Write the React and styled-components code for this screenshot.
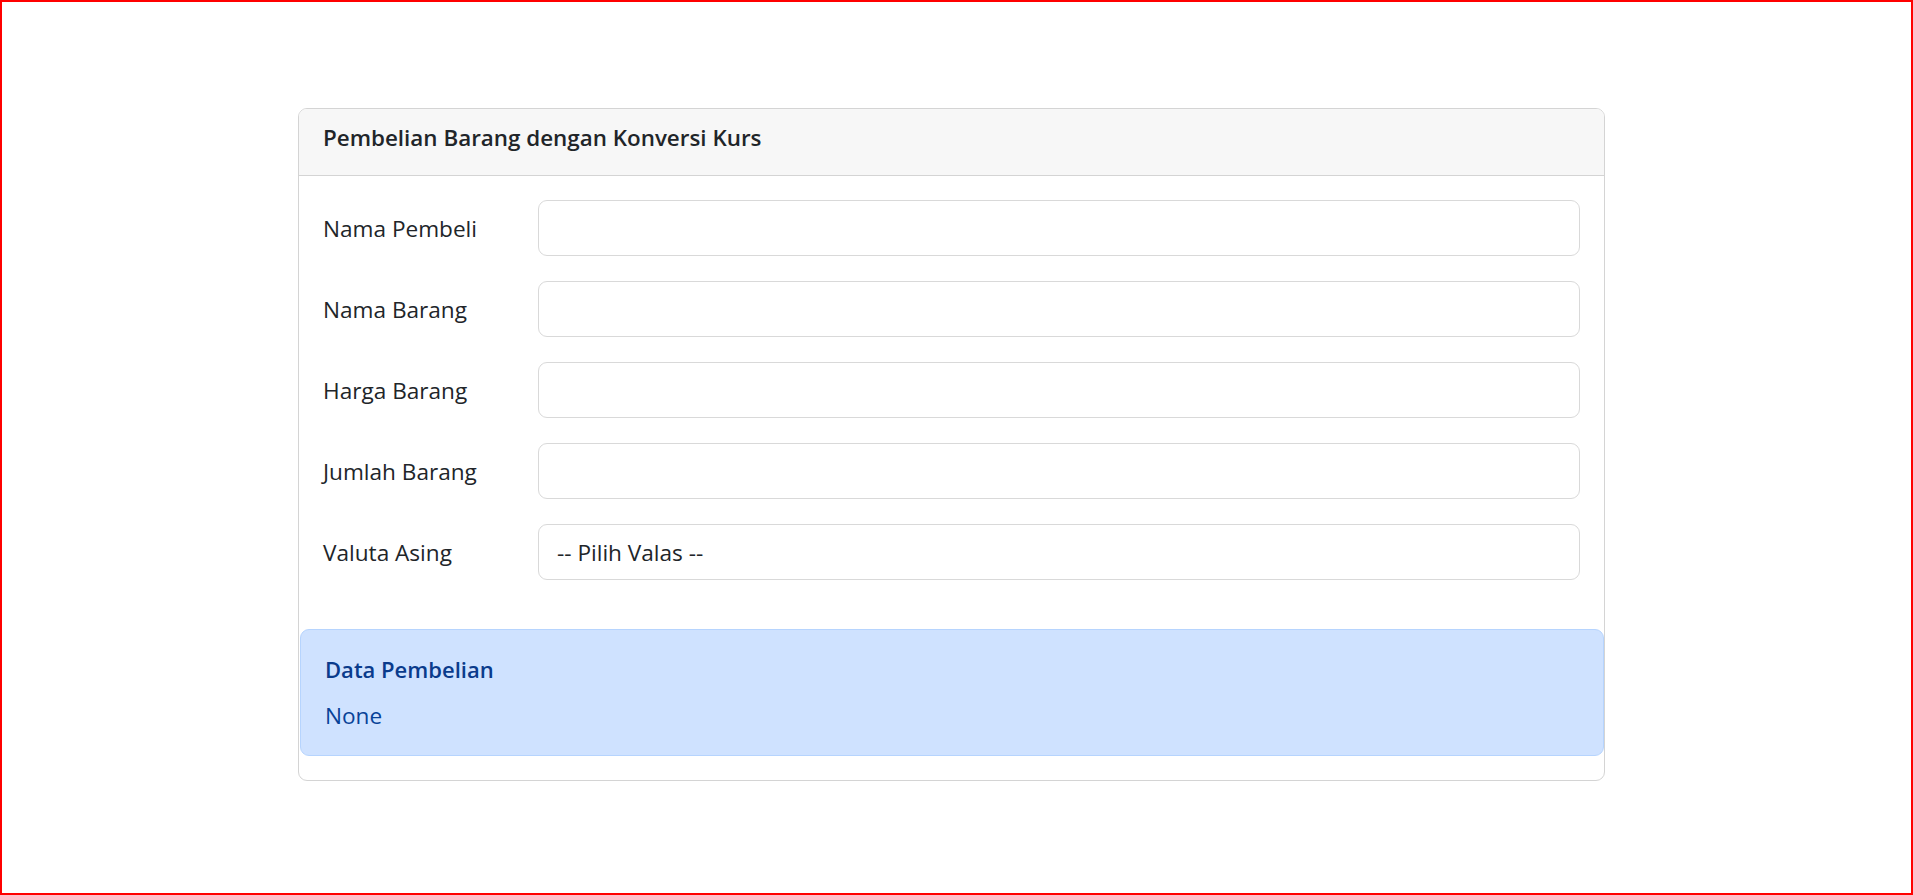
import React from "react";
import styled, { createGlobalStyle } from "styled-components";

const GlobalStyle = createGlobalStyle`
  html, body {
    margin: 0;
    padding: 0;
    background: #ffffff;
  }
  * {
    box-sizing: border-box;
  }
  body {
    font-family: "Open Sans", "Noto Sans", "Liberation Sans", sans-serif;
    color: #212529;
  }
`;

const fields = [
  { label: "Nama Pembeli", type: "text" },
  { label: "Nama Barang", type: "text" },
  { label: "Harga Barang", type: "number" },
  { label: "Jumlah Barang", type: "number" },
];

export default function App() {
  return (
    <>
      <GlobalStyle />
      <Frame>
        <Card>
          <CardHeader>Pembelian Barang dengan Konversi Kurs</CardHeader>
          <CardBody>
            <Form>
              {fields.map((f) => (
                <FormRow key={f.label}>
                  <Label>{f.label}</Label>
                  <Input type={f.type} />
                </FormRow>
              ))}
              <FormRow>
                <Label>Valuta Asing</Label>
                <Select defaultValue="">
                  <option value="">-- Pilih Valas --</option>
                  <option value="USD">USD</option>
                  <option value="EUR">EUR</option>
                  <option value="JPY">JPY</option>
                </Select>
              </FormRow>
            </Form>
          </CardBody>
          <Alert>
            <AlertTitle>Data Pembelian</AlertTitle>
            <AlertText>None</AlertText>
          </Alert>
        </Card>
      </Frame>
    </>
  );
}

const Frame = styled.div`
  height: 100vh;
  border: 2px solid #ff0000;
  padding: 106px 0 0 296px;
`;

const Card = styled.div`
  width: 1307px;
  border: 1px solid #d4d4d4;
  border-radius: 9px;
  background: #ffffff;
  overflow: hidden;
  padding-bottom: 24px;
`;

const CardHeader = styled.div`
  background-color: #f7f7f7;
  border-bottom: 1px solid #d4d4d4;
  padding: 11px 24px 19px;
  font-size: 22.4px;
  font-weight: 600;
  line-height: 36px;
  color: #212529;
`;

const CardBody = styled.div`
  padding: 24px 24px 49px;
`;

const Form = styled.div`
  display: flex;
  flex-direction: column;
  gap: 25px;
`;

const FormRow = styled.div`
  display: grid;
  grid-template-columns: 215px 1fr;
  align-items: center;
`;

const Label = styled.label`
  font-size: 22.6px;
  line-height: 36px;
  color: #212529;
  padding-top: 2px;
`;

const Input = styled.input`
  height: 56px;
  width: 100%;
  border: 1px solid #d9d9d9;
  border-radius: 9px;
  padding: 0 18px;
  font-family: inherit;
  font-size: 22.6px;
  color: #212529;
  background: #ffffff;
  outline: none;
  -moz-appearance: textfield;
  &::-webkit-outer-spin-button,
  &::-webkit-inner-spin-button {
    -webkit-appearance: none;
    margin: 0;
  }
`;

const Select = styled.select`
  height: 56px;
  width: 100%;
  border: 1px solid #d9d9d9;
  border-radius: 9px;
  padding: 0 18px;
  font-family: inherit;
  font-size: 22.6px;
  color: #212529;
  background: #ffffff;
  appearance: none;
  -webkit-appearance: none;
  outline: none;
`;

const Alert = styled.div`
  margin: 0 0 0 1px;
  background-color: #cfe2ff;
  border: 1px solid #b6d4fe;
  border-radius: 9px;
  padding: 25px 24px 21px 24px;
  color: #084298;
`;

const AlertTitle = styled.div`
  font-size: 22px;
  font-weight: 600;
  line-height: 29px;
  margin-bottom: 14px;
  color: #0a3b8c;
`;

const AlertText = styled.div`
  font-size: 22.6px;
  line-height: 36px;
`;
